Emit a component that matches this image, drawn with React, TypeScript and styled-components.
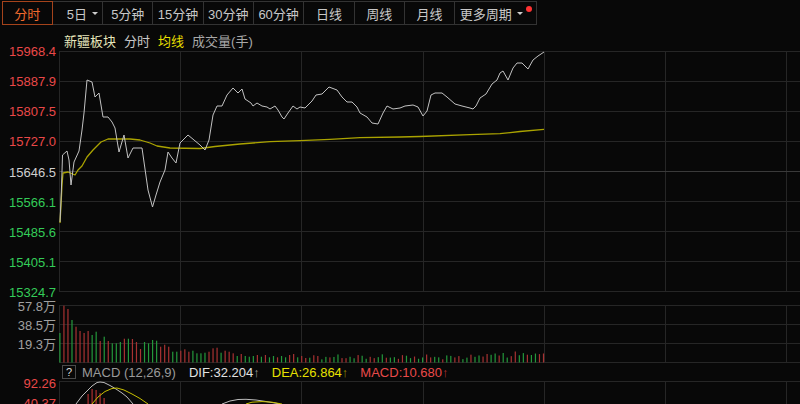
import React from "react"
import styled, { createGlobalStyle } from "styled-components"

const GlobalStyle = createGlobalStyle`
  html, body {
    margin: 0;
    padding: 0;
    background: #080808;
  }
  body {
    font-family: "Liberation Sans", "Noto Sans CJK SC", sans-serif;
  }
`

const GRID = "#262626"
const GRID_MID = "#3a3a3a"
const VLINES = [59.5, 180.5, 301.5, 423.5, 544.5, 665.5, 786.5]

const PRICE_LINE: [number, number][] = [
  [60, 222], [61, 200], [61.5, 187], [62.5, 155], [67, 151], [69, 160], [71, 185], [74, 162],
  [79, 151], [82, 130], [84, 113], [87, 80], [92, 82], [95, 97], [99, 93], [103, 117],
  [108, 117], [112, 122], [115, 128], [119, 152], [124, 135], [128, 158], [133, 148], [142, 148],
  [148, 190], [152.5, 207], [156, 195], [160, 182], [165, 170], [168, 152], [172, 158], [176, 163],
  [180, 143], [184, 139], [188, 135], [194, 140], [200, 145], [205, 150], [209, 140], [213, 115],
  [217, 106], [222, 106], [227, 95], [233, 88], [238, 93], [242, 89], [245, 99], [251, 103],
  [253, 106], [257, 103], [262, 106], [267, 107], [270, 109], [275, 106], [278, 110], [282, 117],
  [284, 119], [288, 113], [293, 106], [297, 109], [300, 107], [305, 108], [312, 101], [316, 95],
  [322, 94], [329, 87], [337, 90], [342, 97], [347, 102], [352, 102], [357, 107], [360, 113],
  [367, 117], [372, 123], [378, 124], [383, 113], [387, 106], [393, 109], [400, 108], [405, 106],
  [413, 105], [418, 107], [423, 116], [427, 111], [431, 95], [435, 93], [442, 93], [447, 97],
  [455, 104], [462, 106], [470, 108], [473, 109], [476, 106], [480, 98], [486, 94], [492, 84],
  [497, 80], [500, 73], [503, 71], [508, 80], [513, 68], [517, 63], [522, 63], [528, 69],
  [533, 60], [538, 56], [544, 52],
]

const AVG_LINE: [number, number][] = [
  [60, 223], [61, 205], [62, 185], [63, 173], [68, 172], [75, 175], [78, 170], [82, 166],
  [87, 157], [93, 150], [101, 142], [108, 139], [117, 139], [130, 139], [140, 140], [150, 143],
  [157, 146], [170, 148], [200, 148.5], [215, 146.5], [240, 144], [270, 141.7], [300, 140.7],
  [330, 139.3], [360, 137.7], [400, 137], [420, 136.5], [470, 134.7], [500, 133.7], [520, 131.5],
  [544, 129.3],
]

const MACD_DIF: [number, number][] = [
  [76, 404], [82, 396], [87, 391], [92, 386], [97, 382.5], [100, 382], [104, 382.5], [110, 385.5],
  [116, 389], [122, 393], [127, 397], [133, 404],
]

const MACD_DEA: [number, number][] = [
  [92, 404], [98, 397], [105, 391.5], [112, 388.5], [117, 388], [124, 390], [132, 394],
  [140, 398.5], [148, 404],
]

const MACD_DIF_2: [number, number][] = [
  [222, 404], [230, 401], [238, 399.5], [246, 399.3], [256, 400], [264, 401.2], [272, 402.5], [280, 404],
]

const MACD_DEA_2: [number, number][] = [
  [246, 404], [252, 402.2], [262, 401.6], [272, 402.2], [282, 404],
]

const MACD_BARS: [number, number][] = [
  [87.5, 394], [91.5, 389], [95.5, 390], [99.5, 393], [103.5, 398],
]

const VOL_TOPS = [
  333, 305.7, 309, 320, 326.7, 331, 333, 331, 335, 331.7,
  341, 336.7, 341, 343.3, 343.3, 342, 338.7, 338.7, 339, 342,
  349, 342, 343.3, 340, 340.7, 346.7, 344.7, 346.7, 351.7, 351.7,
  350.7, 349.3, 351.7, 350.7, 353.3, 353.3, 352.7, 351.7, 348.3, 347.7,
  352.7, 350.7, 351.7, 353.3, 356, 354, 356, 356.7, 356, 355,
  356.7, 355, 357.3, 356, 357.3, 356, 357.3, 355, 354, 357.3,
  356, 358,
]

const VOL_SIDE = "GRRGRRRRGGRGRGGGRGRRRGGGGRRRGGRRRGGGGRRRGRRRGRGGGRGRGGRGGRRGRR"

const SPIKES: Record<number, number> = { 106: 354, 108: 353.5, 110: 353, 113: 351.5, 117: 355 }

const volumeBars = Array.from({ length: 121 }, (_, i) => {
  let top: number
  if (i < VOL_TOPS.length) {
    top = VOL_TOPS[i]
  } else if (SPIKES[i]) {
    top = SPIKES[i]
  } else {
    const h = 5.5 + 1.5 * Math.sin(i * 2.3) + 1.2 * Math.cos(i * 1.1) + (i > 100 ? (i - 100) * 0.15 : 0)
    top = 362.5 - h
  }
  const up = i < VOL_SIDE.length ? VOL_SIDE[i] === "R" : (i * 37) % 7 < 3
  return { x: 59.3 + 4.03 * i, top, up }
})

const toPoints = (pts: [number, number][]) => pts.map(([x, y]) => `${x},${y}`).join(" ")

const Page = styled.div`
  width: 800px;
  height: 404px;
  overflow: hidden;
  background: #080808;
  color: #c8c8c8;
  font-family: "Liberation Sans", "Noto Sans CJK SC", sans-serif;
  font-size: 13px;
`

const Toolbar = styled.div`
  display: flex;
  height: 24px;
  margin-top: 1px;
  padding-left: 1.5px;
`

const PeriodButton = styled.div<{ $active?: boolean; $wide?: boolean; $caret?: boolean }>`
  box-sizing: border-box;
  width: ${(p) => (p.$wide ? 83 : 51.3)}px;
  height: 24px;
  margin-left: -1px;
  &:first-child {
    margin-left: 0;
  }
  border: 1px solid ${(p) => (p.$active ? "#a5431b" : "#333333")};
  position: relative;
  z-index: ${(p) => (p.$active ? 1 : 0)};
  display: flex;
  align-items: center;
  justify-content: center;
  padding-left: ${(p) => (p.$caret && !p.$wide ? 10 : 0)}px;
  color: ${(p) => (p.$active ? "#ef6a2e" : "#c8c8c8")};
  font-size: 13px;
  white-space: nowrap;
`

const Caret = styled.span`
  width: 0;
  height: 0;
  margin-left: 5px;
  border-left: 3px solid transparent;
  border-right: 3px solid transparent;
  border-top: 3.5px solid #cccccc;
`

const RedDot = styled.span`
  align-self: flex-start;
  width: 6px;
  height: 6px;
  margin: 4px 0 0 3px;
  border-radius: 50%;
  background: #ff3232;
`

const Legend = styled.div`
  display: flex;
  gap: 8px;
  height: 26px;
  box-sizing: border-box;
  padding: 9px 0 0 64px;
  font-size: 13px;
  line-height: 16px;
`

const LegendItem = styled.span<{ $color: string }>`
  color: ${(p) => p.$color};
`

const Panel = styled.div<{ $h: number; $mt?: number }>`
  display: flex;
  height: ${(p) => p.$h}px;
  margin-top: ${(p) => p.$mt ?? 0}px;
`

const Axis = styled.div<{ $mt: number; $mb?: number; $gap?: number; $spread?: boolean }>`
  width: 59px;
  flex-shrink: 0;
  display: flex;
  flex-direction: column;
  justify-content: ${(p) => (p.$spread ? "space-between" : "flex-start")};
  gap: ${(p) => p.$gap ?? 0}px;
  margin-top: ${(p) => p.$mt}px;
  margin-bottom: ${(p) => p.$mb ?? 0}px;
`

const AxisLabel = styled.div<{ $color: string }>`
  text-align: right;
  padding-right: 3px;
  font-size: 13px;
  line-height: 14px;
  color: ${(p) => p.$color};
  white-space: nowrap;
`

const ChartSvg = styled.svg`
  display: block;
  flex-shrink: 0;
`

const MacdHeader = styled.div`
  height: 18px;
  display: flex;
  align-items: center;
  padding-left: 62px;
  font-size: 13px;
  white-space: nowrap;
`

const HelpBox = styled.div`
  box-sizing: border-box;
  width: 14px;
  height: 14px;
  margin-right: 6px;
  border: 1px solid #4a4a4a;
  display: flex;
  align-items: center;
  justify-content: center;
  font-size: 11px;
  color: #dddddd;
`

const IndicatorName = styled.span`
  color: #9a9a9a;
  margin-right: 13px;
`

const IndicatorValue = styled.span<{ $color: string }>`
  color: ${(p) => p.$color};
  margin-right: 12px;
`

const Trend = styled.span<{ $color: string }>`
  color: ${(p) => p.$color};
`

const GridLines: React.FC<{ ys: number[]; top: number; bottom: number; mid?: number }> = ({ ys, top, bottom, mid }) => (
  <g shapeRendering="crispEdges">
    {VLINES.map((x) => (
      <line key={`v${x}`} x1={x} x2={x} y1={top} y2={bottom} stroke={GRID} strokeWidth={1} />
    ))}
    {ys.map((y, i) => (
      <line key={`h${y}`} x1={59} x2={800} y1={y} y2={y} stroke={i === mid ? GRID_MID : GRID} strokeWidth={1} />
    ))}
  </g>
)

const PRICES = [
  { v: "15968.4", c: "#ea4848" },
  { v: "15887.9", c: "#ea4848" },
  { v: "15807.5", c: "#ea4848" },
  { v: "15727.0", c: "#ea4848" },
  { v: "15646.5", c: "#cfcfcf" },
  { v: "15566.1", c: "#34cc58" },
  { v: "15485.6", c: "#34cc58" },
  { v: "15405.1", c: "#34cc58" },
  { v: "15324.7", c: "#34cc58" },
]

const PERIODS = ["5分钟", "15分钟", "30分钟", "60分钟", "日线", "周线", "月线"]

export default function App() {
  return (
    <Page>
      <GlobalStyle />
      <Toolbar>
        <PeriodButton $active>分时</PeriodButton>
        <PeriodButton $caret>
          5日
          <Caret />
        </PeriodButton>
        {PERIODS.map((p) => (
          <PeriodButton key={p}>{p}</PeriodButton>
        ))}
        <PeriodButton $wide $caret>
          更多周期
          <Caret />
          <RedDot />
        </PeriodButton>
      </Toolbar>

      <Legend>
        <LegendItem $color="#e6e6bc">新疆板块</LegendItem>
        <LegendItem $color="#c8c8c8">分时</LegendItem>
        <LegendItem $color="#e6df00">均线</LegendItem>
        <LegendItem $color="#a8a8a8">成交量(手)</LegendItem>
      </Legend>

      <Panel $h={241}>
        <Axis $spread $mt={-6} $mb={-8}>
          {PRICES.map((p) => (
            <AxisLabel key={p.v} $color={p.c}>
              {p.v}
            </AxisLabel>
          ))}
        </Axis>
        <ChartSvg width={741} height={241} viewBox="59 51 741 241">
          <GridLines ys={[51.5, 81.5, 111.5, 141.5, 171.5, 201.5, 231.5, 261.5, 291.5]} top={51} bottom={292} mid={4} />
          <polyline points={toPoints(AVG_LINE)} fill="none" stroke="#aaa300" strokeWidth={1.3} strokeLinejoin="round" />
          <polyline points={toPoints(PRICE_LINE)} fill="none" stroke="#c2c2c2" strokeWidth={1} strokeLinejoin="round" />
        </ChartSvg>
      </Panel>

      <Panel $h={58} $mt={13}>
        <Axis $mt={-5.5} $gap={5}>
          <AxisLabel $color="#a0a0a0">57.8万</AxisLabel>
          <AxisLabel $color="#a0a0a0">38.5万</AxisLabel>
          <AxisLabel $color="#a0a0a0">19.3万</AxisLabel>
        </Axis>
        <ChartSvg width={741} height={58} viewBox="59 305 741 58">
          <GridLines ys={[305.5, 324.5, 343.5, 362.5]} top={305} bottom={363} />
          {volumeBars.map((b, i) => (
            <rect
              key={i}
              x={b.x}
              y={b.top}
              width={1.2}
              height={362.5 - b.top}
              fill={b.up ? "#a83232" : "#24983b"}
            />
          ))}
        </ChartSvg>
      </Panel>

      <MacdHeader>
        <HelpBox>?</HelpBox>
        <IndicatorName>MACD (12,26,9)</IndicatorName>
        <IndicatorValue $color="#e2e2e2">
          DIF:32.204<Trend $color="#9a9a9a">↑</Trend>
        </IndicatorValue>
        <IndicatorValue $color="#e6e000">
          DEA:26.864<Trend $color="#9a9400">↑</Trend>
        </IndicatorValue>
        <IndicatorValue $color="#e84a4a">
          MACD:10.680<Trend $color="#b03030">↑</Trend>
        </IndicatorValue>
      </MacdHeader>

      <Panel $h={23}>
        <Axis $mt={-4} $gap={6}>
          <AxisLabel $color="#ea4848">92.26</AxisLabel>
          <AxisLabel $color="#ea4848">40.37</AxisLabel>
        </Axis>
        <ChartSvg width={741} height={23} viewBox="59 381 741 23">
          <GridLines ys={[381.5]} top={381} bottom={404} />
          {MACD_BARS.map(([x, y]) => (
            <rect key={x} x={x} y={y} width={1.2} height={404 - y} fill="#b03030" />
          ))}
          <polyline points={toPoints(MACD_DIF)} fill="none" stroke="#bdbdbd" strokeWidth={1} />
          <polyline points={toPoints(MACD_DEA)} fill="none" stroke="#c8c000" strokeWidth={1} />
          <polyline points={toPoints(MACD_DIF_2)} fill="none" stroke="#bdbdbd" strokeWidth={1} />
          <polyline points={toPoints(MACD_DEA_2)} fill="none" stroke="#c8c000" strokeWidth={1} />
        </ChartSvg>
      </Panel>
    </Page>
  )
}
